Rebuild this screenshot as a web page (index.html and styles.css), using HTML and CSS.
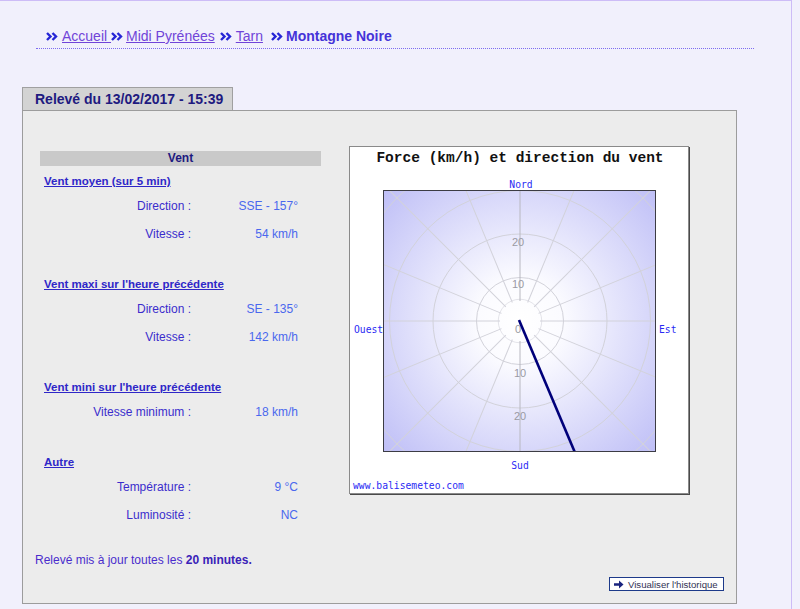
FILE: index.html
```html
<!DOCTYPE html>
<html lang="fr">
<head>
<meta charset="utf-8">
<title>Montagne Noire - Relevé</title>
<link rel="stylesheet" href="styles.css">
</head>
<body>
<div class="page">
  <div class="crumbs">
    <svg class="chev c1" width="12" height="9" viewBox="0 0 12 9" xmlns="http://www.w3.org/2000/svg"><path d="M1 1 L4.5 4.5 L1 8 M6.5 1 L10 4.5 L6.5 8" fill="none" stroke="#2626d6" stroke-width="2.4"/></svg><a href="#" class="crumb">Accueil </a><svg class="chev c2" width="12" height="9" viewBox="0 0 12 9" xmlns="http://www.w3.org/2000/svg"><path d="M1 1 L4.5 4.5 L1 8 M6.5 1 L10 4.5 L6.5 8" fill="none" stroke="#2626d6" stroke-width="2.4"/></svg><a href="#" class="crumb">Midi Pyrénées</a><svg class="chev c3" width="12" height="9" viewBox="0 0 12 9" xmlns="http://www.w3.org/2000/svg"><path d="M1 1 L4.5 4.5 L1 8 M6.5 1 L10 4.5 L6.5 8" fill="none" stroke="#2626d6" stroke-width="2.4"/></svg><a href="#" class="crumb">Tarn</a><svg class="chev c4" width="12" height="9" viewBox="0 0 12 9" xmlns="http://www.w3.org/2000/svg"><path d="M1 1 L4.5 4.5 L1 8 M6.5 1 L10 4.5 L6.5 8" fill="none" stroke="#2626d6" stroke-width="2.4"/></svg><span class="current">Montagne Noire</span>
  </div>

  <div class="tab">Relevé du 13/02/2017 - 15:39</div>
  <div class="panel">
    <div class="top">
      <div class="left">
        <div class="bar">Vent</div>

        <div class="section first">
          <a href="#" class="head">Vent moyen (sur 5 min)</a>
          <div class="rows">
            <span class="lbl">Direction :</span><span class="val">SSE - 157°</span>
            <span class="lbl">Vitesse :</span><span class="val">54 km/h</span>
          </div>
        </div>

        <div class="section">
          <a href="#" class="head">Vent maxi sur l'heure précédente</a>
          <div class="rows">
            <span class="lbl">Direction :</span><span class="val">SE - 135°</span>
            <span class="lbl">Vitesse :</span><span class="val">142 km/h</span>
          </div>
        </div>

        <div class="section">
          <a href="#" class="head">Vent mini sur l'heure précédente</a>
          <div class="rows">
            <span class="lbl">Vitesse minimum :</span><span class="val">18 km/h</span>
          </div>
        </div>

        <div class="section">
          <a href="#" class="head">Autre</a>
          <div class="rows">
            <span class="lbl">Température :</span><span class="val">9 °C</span>
            <span class="lbl">Luminosité :</span><span class="val">NC</span>
          </div>
        </div>
      </div>

      <div class="chart">
        <svg width="338" height="346" viewBox="0 0 338 346" xmlns="http://www.w3.org/2000/svg">
          <defs>
            <radialGradient id="bg" gradientUnits="userSpaceOnUse" cx="170" cy="174" r="195">
              <stop offset="0" stop-color="#ffffff"/>
              <stop offset="0.22" stop-color="#fbfbff"/>
              <stop offset="1" stop-color="#bcbcf6"/>
            </radialGradient>
            <clipPath id="plot">
              <rect x="33" y="43" width="273" height="262"/>
            </clipPath>
          </defs>
          <text x="170" y="15" class="title" text-anchor="middle">Force (km/h) et direction du vent</text>
          <rect x="33" y="43" width="273" height="262" fill="url(#bg)"/>
          <g clip-path="url(#plot)">
            <g transform="translate(170 174)" fill="none" stroke="#d2d2da" stroke-width="1">
              <circle r="21.75" stroke="#e4e4ea"/>
              <circle r="43.5"/>
              <circle r="87"/>
              <circle r="130.5"/>
              <circle r="174"/>
              <line x1="0" y1="-20" x2="0" y2="-220" transform="rotate(22.5)"/>
              <line x1="0" y1="-20" x2="0" y2="-220" transform="rotate(45)"/>
              <line x1="0" y1="-20" x2="0" y2="-220" transform="rotate(67.5)"/>
              <line x1="0" y1="-20" x2="0" y2="-220" transform="rotate(90)"/>
              <line x1="0" y1="-20" x2="0" y2="-220" transform="rotate(112.5)"/>
              <line x1="0" y1="-20" x2="0" y2="-220" transform="rotate(135)"/>
              <line x1="0" y1="-20" x2="0" y2="-220" transform="rotate(157.5)"/>
              <line x1="0" y1="-20" x2="0" y2="-220" transform="rotate(202.5)"/>
              <line x1="0" y1="-20" x2="0" y2="-220" transform="rotate(225)"/>
              <line x1="0" y1="-20" x2="0" y2="-220" transform="rotate(247.5)"/>
              <line x1="0" y1="-20" x2="0" y2="-220" transform="rotate(270)"/>
              <line x1="0" y1="-20" x2="0" y2="-220" transform="rotate(292.5)"/>
              <line x1="0" y1="-20" x2="0" y2="-220" transform="rotate(315)"/>
              <line x1="0" y1="-20" x2="0" y2="-220" transform="rotate(337.5)"/>
              <line x1="0" y1="-20" x2="0" y2="-220" stroke="#b8b8c0"/>
              <line x1="0" y1="20" x2="0" y2="220" stroke="#b8b8c0"/>
            </g>
            <g class="ring">
              <text x="168" y="186" text-anchor="middle">0</text>
              <text x="168" y="141" text-anchor="middle">10</text>
              <text x="168" y="99" text-anchor="middle">20</text>
              <text x="170" y="230" text-anchor="middle">10</text>
              <text x="170" y="273" text-anchor="middle">20</text>
            </g>
            <line x1="169" y1="173" x2="226" y2="308" stroke="#00007a" stroke-width="2.6"/>
          </g>
          <rect x="33.5" y="43.5" width="272" height="261" fill="none" stroke="#3c3c44" stroke-width="1"/>
          <g class="axis">
            <text x="171" y="41" text-anchor="middle">Nord</text>
            <text x="170" y="322" text-anchor="middle">Sud</text>
            <text x="4" y="186">Ouest</text>
            <text x="309" y="186">Est</text>
            <text x="3" y="342">www.balisemeteo.com</text>
          </g>
        </svg>
      </div>
    </div>

    <p class="note">Relevé mis à jour toutes les <b>20 minutes.</b></p>

    <div class="actions">
      <a href="#" class="btn">
        <svg class="arrow" width="10" height="9" viewBox="0 0 10 9" xmlns="http://www.w3.org/2000/svg">
          <path d="M0 3.2 H5 V0.5 L9.5 4.5 L5 8.5 V5.8 H0 Z" fill="#1a237e"/>
        </svg>
        Visualiser l'historique
      </a>
    </div>
  </div>
</div>
</body>
</html>
```

FILE: styles.css
```css
* { box-sizing: border-box; }

html, body {
  margin: 0;
  padding: 0;
}

body {
  background: #f1f0fc;
  font-family: "Liberation Sans", Arial, sans-serif;
  color: #3a2ccc;
}

.page {
  width: 792px;
  height: 609px;
  border-top: 1px solid #cdbcf7;
  border-right: 1px solid #cdbcf7;
}

/* breadcrumb */
.crumbs {
  margin-left: 36px;
  width: 718px;
  height: 48px;
  padding: 27px 0 0 10px;
  display: flex;
  align-items: flex-start;
  flex-wrap: nowrap;
  font-size: 14px;
  line-height: 16px;
  border-bottom: 1px dotted #7d6cf0;
  white-space: pre;
}

.chev {
  flex: none;
  margin-top: 4px;
}
.c1 { margin-right: 4px; }
.c2 { margin-right: 3px; }
.c3 { margin-left: 5px; margin-right: 4px; }
.c4 { margin-left: 8px; margin-right: 3px; }

.crumb {
  color: #7044d8;
  text-decoration: underline;
}

.current {
  color: #4533d8;
  font-weight: bold;
}

/* tab + panel */
.tab {
  margin: 38px 0 0 22px;
  width: 211px;
  height: 23px;
  background: #d3d3d3;
  border: 1px solid #a0a0a0;
  border-bottom: none;
  color: #1e1a80;
  font-weight: bold;
  font-size: 14px;
  line-height: 22px;
  padding-left: 12px;
  white-space: nowrap;
}

.panel {
  margin-left: 22px;
  width: 715px;
  height: 494px;
  background: #ececec;
  border: 1px solid #9c9c9c;
  padding: 35px 12px 0 12px;
}

.top {
  display: flex;
  align-items: flex-start;
}

.left {
  width: 281px;
  margin: 5px 0 0 5px;
}

.chart {
  margin-left: 28px;
  width: 340px;
  height: 348px;
  background: #ffffff;
  border: 1px solid #8a8a8a;
  box-shadow: 1px 1px 0 #4a4a4a;
}

.chart svg { display: block; }

.bar {
  background: #c9c9c9;
  height: 15px;
  line-height: 15px;
  text-align: center;
  font-size: 12px;
  font-weight: bold;
  color: #1e1a80;
}

.section { margin-top: 27px; }
.section.first { margin-top: 6px; }

.head {
  display: block;
  padding-left: 4px;
  height: 18px;
  line-height: 18px;
  font-size: 11.5px;
  font-weight: bold;
  color: #2f27c8;
  text-decoration: underline;
}

.rows {
  margin-top: 2px;
  display: grid;
  grid-template-columns: 151px 107px;
  grid-auto-rows: 28px;
  align-items: center;
  font-size: 12px;
}

.lbl {
  text-align: right;
  color: #3b2ccc;
}

.val {
  text-align: right;
  color: #4a68ee;
}

/* chart texts */
.title {
  font-family: "Liberation Mono", "DejaVu Sans Mono", monospace;
  font-size: 14.5px;
  font-weight: bold;
  fill: #111111;
}

.axis text {
  font-family: "DejaVu Sans Mono", "Liberation Mono", monospace;
  font-size: 9.7px;
  fill: #2a2af4;
}

.ring text {
  font-family: "Liberation Sans", Arial, sans-serif;
  font-size: 11px;
  fill: #9a9aa4;
}

/* footer */
.note {
  margin: 23px 0 0 0;
  font-size: 12px;
  line-height: 16px;
  color: #4a2ccc;
}

.note b { color: #3a22b8; }

.actions {
  margin-top: 9px;
  display: flex;
  justify-content: flex-end;
}

.btn {
  display: flex;
  align-items: center;
  gap: 4px;
  width: 115px;
  height: 14px;
  padding-left: 4px;
  background: #ffffff;
  border: 1px solid #1d3a8a;
  font-family: "Liberation Sans", Arial, sans-serif;
  font-size: 9.6px;
  color: #333355;
  text-decoration: none;
  white-space: nowrap;
}

.arrow { flex: none; }
```
